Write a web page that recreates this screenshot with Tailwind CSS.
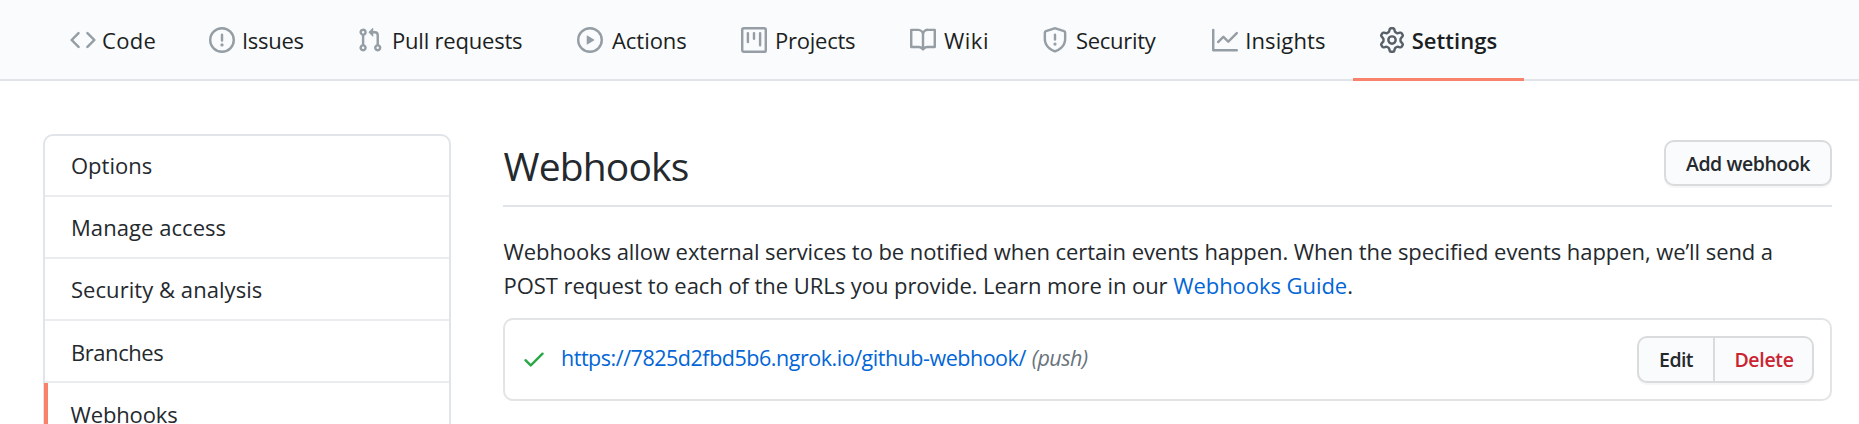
<!DOCTYPE html>
<html lang="en">
<head>
<meta charset="utf-8">
<title>Webhooks</title>
<script src="https://cdn.jsdelivr.net/npm/@tailwindcss/browser@4"></script>
</head>
<body class="h-[424px] overflow-hidden bg-white font-['Open_Sans','Noto_Sans',sans-serif] text-[22px] text-[#24292e]">
<nav class="flex h-[81px] border-b-2 border-[#e1e4e8] bg-[#fafbfc] pl-[69.5px] whitespace-nowrap text-[#1b1f23]">
  <a class="flex h-[80px] w-[139.8px] shrink-0 items-center"><svg class="size-[26px] shrink-0 fill-[#959da5]" viewBox="0 0 16 16"><path fill-rule="evenodd" d="M4.72 3.22a.75.75 0 011.06 1.06L2.06 8l3.72 3.72a.75.75 0 11-1.06 1.06L.47 8.53a.75.75 0 010-1.06l4.25-4.25zm6.56 0a.75.75 0 10-1.06 1.06L13.94 8l-3.72 3.72a.75.75 0 101.06 1.06l4.25-4.25a.75.75 0 000-1.06l-4.25-4.25z"/></svg><span class="ml-[6.5px] tracking-[0.3px]">Code</span></a>
  <a class="flex h-[80px] w-[147.5px] shrink-0 items-center"><svg class="size-[26px] shrink-0 fill-[#959da5]" viewBox="0 0 16 16"><path fill-rule="evenodd" d="M8 1.5a6.5 6.5 0 100 13 6.5 6.5 0 000-13zM0 8a8 8 0 1116 0A8 8 0 010 8zm9 3a1 1 0 11-2 0 1 1 0 012 0zm-.25-6.25a.75.75 0 00-1.5 0v3.5a.75.75 0 001.5 0v-3.5z"/></svg><span class="ml-[6.7px] tracking-[-0.3px]">Issues</span></a>
  <a class="flex h-[80px] w-[220.2px] shrink-0 items-center"><svg class="size-[26px] shrink-0 fill-[#959da5]" viewBox="0 0 16 16"><path fill-rule="evenodd" d="M7.177 3.073L9.573.677A.25.25 0 0110 .854v4.792a.25.25 0 01-.427.177L7.177 3.427a.25.25 0 010-.354zM3.75 2.5a.75.75 0 100 1.5.75.75 0 000-1.5zm-2.25.75a2.25 2.25 0 113 2.122v5.256a2.251 2.251 0 11-1.5 0V5.372A2.25 2.25 0 011.5 3.25zM11 2.5h-1V4h1a1 1 0 011 1v5.628a2.251 2.251 0 101.5 0V5A2.5 2.5 0 0011 2.5zm1 10.25a.75.75 0 111.5 0 .75.75 0 01-1.5 0zM3.75 12a.75.75 0 100 1.5.75.75 0 000-1.5z"/></svg><span class="ml-[9.2px] tracking-[-0.2px]">Pull requests</span></a>
  <a class="flex h-[80px] w-[164px] shrink-0 items-center"><svg class="size-[26px] shrink-0 fill-[#959da5]" viewBox="0 0 16 16"><path fill-rule="evenodd" d="M1.5 8a6.5 6.5 0 1113 0 6.5 6.5 0 01-13 0zM8 0a8 8 0 100 16A8 8 0 008 0zM6.379 5.227A.25.25 0 006 5.442v5.117a.25.25 0 00.379.214l4.264-2.559a.25.25 0 000-.428L6.379 5.227z"/></svg><span class="ml-[9px] tracking-[-0.05px]">Actions</span></a>
  <a class="flex h-[80px] w-[169px] shrink-0 items-center"><svg class="size-[26px] shrink-0 fill-[#959da5]" viewBox="0 0 16 16"><path fill-rule="evenodd" d="M1.75 0A1.75 1.75 0 000 1.75v12.5C0 15.216.784 16 1.75 16h12.5A1.75 1.75 0 0016 14.25V1.75A1.75 1.75 0 0014.25 0H1.75zM1.5 1.75a.25.25 0 01.25-.25h12.5a.25.25 0 01.25.25v12.5a.25.25 0 01-.25.25H1.75a.25.25 0 01-.25-.25V1.75zM11.75 3a.75.75 0 00-.75.75v7.5a.75.75 0 001.5 0v-7.5a.75.75 0 00-.75-.75zm-8.25.75a.75.75 0 011.5 0v5.5a.75.75 0 01-1.5 0v-5.5zM8 3a.75.75 0 00-.75.75v3.5a.75.75 0 001.5 0v-3.5A.75.75 0 008 3z"/></svg><span class="ml-[8px] tracking-[-0.23px]">Projects</span></a>
  <a class="flex h-[80px] w-[131.8px] shrink-0 items-center"><svg class="size-[26px] shrink-0 fill-[#959da5]" viewBox="0 0 16 16"><path fill-rule="evenodd" d="M0 1.75A.75.75 0 01.75 1h4.253c1.227 0 2.317.59 3 1.501A3.744 3.744 0 0111.006 1h4.245a.75.75 0 01.75.75v10.5a.75.75 0 01-.75.75h-4.507a2.25 2.25 0 00-1.591.659l-.622.621a.75.75 0 01-1.06 0l-.622-.621A2.25 2.25 0 005.258 13H.75a.75.75 0 01-.75-.75V1.75zm8.755 3a2.25 2.25 0 012.25-2.25H14.5v9h-3.757c-.71 0-1.4.201-1.992.572l.004-7.322zm-1.504 7.324l.004-5.073-.002-2.253A2.25 2.25 0 005.003 2.5H1.5v9h3.757a3.75 3.75 0 011.994.574z"/></svg><span class="ml-[8px] tracking-[0.5px]">Wiki</span></a>
  <a class="flex h-[80px] w-[170.2px] shrink-0 items-center"><svg class="size-[26px] shrink-0 fill-[#959da5]" viewBox="0 0 16 16"><path fill-rule="evenodd" d="M7.467.133a1.75 1.75 0 011.066 0l5.25 1.68A1.75 1.75 0 0115 3.48V7c0 1.566-.32 3.182-1.303 4.682-.983 1.498-2.585 2.813-5.032 3.855a1.7 1.7 0 01-1.33 0c-2.447-1.042-4.049-2.357-5.032-3.855C1.32 10.182 1 8.566 1 7V3.48a1.75 1.75 0 011.217-1.667l5.25-1.68zm.61 1.429a.25.25 0 00-.153 0l-5.25 1.68a.25.25 0 00-.174.238V7c0 1.358.275 2.666 1.057 3.86.784 1.194 2.121 2.34 4.366 3.297a.2.2 0 00.154 0c2.245-.956 3.582-2.104 4.366-3.298C13.225 9.666 13.5 8.36 13.5 7V3.48a.25.25 0 00-.174-.237l-5.25-1.68zM9 10.5a1 1 0 11-2 0 1 1 0 012 0zm-.25-5.75a.75.75 0 10-1.5 0v3a.75.75 0 001.5 0v-3z"/></svg><span class="ml-[8.2px] tracking-[-0.28px]">Security</span></a>
  <a class="flex h-[80px] w-[141px] shrink-0 items-center"><svg class="size-[26px] shrink-0 fill-[#959da5]" viewBox="0 0 16 16"><path fill-rule="evenodd" d="M1.5 1.75a.75.75 0 00-1.5 0v12.5c0 .414.336.75.75.75h14.5a.75.75 0 000-1.5H1.5V1.75zm14.28 2.53a.75.75 0 00-1.06-1.06L10 7.94 7.53 5.47a.75.75 0 00-1.06 0L3.22 8.72a.75.75 0 001.06 1.06L7 7.06l2.47 2.47a.75.75 0 001.06 0l5.25-5.25z"/></svg><span class="ml-[7.3px] tracking-[0.1px]">Insights</span></a>
  <a class="flex h-[81px] w-[171px] shrink-0 items-center border-b-[3px] border-[#f9826c] pt-[2px] pl-[26px]"><svg class="size-[26px] shrink-0 fill-[#586069]" viewBox="0 0 16 16"><path fill-rule="evenodd" d="M7.429 1.525a6.593 6.593 0 011.142 0c.036.003.108.036.137.146l.289 1.105c.147.56.55.967.997 1.189.174.086.341.183.501.29.417.278.97.423 1.53.27l1.102-.303c.11-.03.175.016.195.046.219.31.41.641.573.989.014.031.022.11-.059.19l-.815.806c-.411.406-.562.957-.53 1.456a4.588 4.588 0 010 .582c-.032.499.119 1.05.53 1.456l.815.806c.08.08.073.159.059.19a6.494 6.494 0 01-.573.99c-.02.029-.086.074-.195.045l-1.103-.303c-.559-.153-1.112-.008-1.529.27-.16.107-.327.204-.5.29-.449.222-.851.628-.998 1.189l-.289 1.105c-.029.11-.101.143-.137.146a6.613 6.613 0 01-1.142 0c-.036-.003-.108-.037-.137-.146l-.289-1.105c-.147-.56-.55-.967-.997-1.189a4.502 4.502 0 01-.501-.29c-.417-.278-.97-.423-1.53-.27l-1.102.303c-.11.03-.175-.016-.195-.046a6.492 6.492 0 01-.573-.989c-.014-.031-.022-.11.059-.19l.815-.806c.411-.406.562-.957.53-1.456a4.587 4.587 0 010-.582c.032-.499-.119-1.05-.53-1.456l-.815-.806c-.08-.08-.073-.159-.059-.19a6.44 6.44 0 01.573-.99c.02-.029.086-.075.195-.045l1.103.303c.559.153 1.112.008 1.529-.27.16-.107.327-.204.5-.29.449-.222.851-.628.998-1.189l.289-1.105c.029-.11.101-.143.137-.146zM8 0c-.236 0-.47.01-.701.03-.743.065-1.29.615-1.458 1.261l-.29 1.106c-.017.066-.078.158-.211.224a5.994 5.994 0 00-.668.386c-.123.082-.233.09-.3.071L3.27 2.776c-.644-.177-1.392.02-1.82.63a7.977 7.977 0 00-.704 1.217c-.315.675-.111 1.422.363 1.891l.815.806c.05.048.098.147.088.294a6.084 6.084 0 000 .772c.01.147-.038.246-.088.294l-.815.806c-.474.469-.678 1.216-.363 1.891.2.428.436.835.704 1.218.428.609 1.176.806 1.82.63l1.103-.303c.066-.019.176-.011.299.071.213.143.436.272.668.386.133.066.194.158.212.224l.289 1.106c.169.646.715 1.196 1.458 1.26a8.094 8.094 0 001.402 0c.743-.064 1.29-.614 1.458-1.26l.29-1.106c.017-.066.078-.158.211-.224a5.98 5.98 0 00.668-.386c.123-.082.233-.09.3-.071l1.102.302c.644.177 1.392-.02 1.82-.63.268-.382.505-.789.704-1.217.315-.675.111-1.422-.364-1.891l-.814-.806c-.05-.048-.098-.147-.088-.294a6.1 6.1 0 000-.772c-.01-.147.039-.246.088-.294l.814-.806c.475-.469.679-1.216.364-1.891a7.992 7.992 0 00-.704-1.218c-.428-.609-1.176-.806-1.82-.63l-1.103.303c-.066.019-.176.011-.299-.071a5.991 5.991 0 00-.668-.386c-.133-.066-.194-.158-.212-.224L10.16 1.29C9.99.645 9.444.095 8.701.031A8.094 8.094 0 008 0zm1.5 8a1.5 1.5 0 11-3 0 1.5 1.5 0 013 0zM11 8a3 3 0 11-6 0 3 3 0 016 0z"/></svg><span class="ml-[6.7px] font-semibold tracking-[0.05px]">Settings</span></a>
</nav>
<div class="flex items-start pl-[43px] pr-[27px]">
  <aside class="mt-[53px] w-[408px] shrink-0 rounded-[10px] border-2 border-[#e1e4e8] leading-[60px]">
    <a class="block h-[61px] border-b-2 border-[#eaecef] pl-[26px] leading-[58px]">Options</a>
    <a class="block h-[62px] border-b-2 border-[#eaecef] pl-[26px] tracking-[0.06px]">Manage access</a>
    <a class="block h-[62px] border-b-2 border-[#eaecef] pl-[26px] tracking-[0.05px]">Security &amp; analysis</a>
    <a class="block h-[62px] border-b-2 border-[#eaecef] pl-[26px] leading-[62px] tracking-[-0.44px]">Branches</a>
    <a class="-ml-px block h-[62px] border-b-2 border-l-[4px] border-b-[#eaecef] border-l-[#f9826c] pl-[22.5px] leading-[62px] tracking-[-0.13px]">Webhooks</a>
  </aside>
  <main class="ml-[52px] mt-[59px] min-w-0 flex-1">
    <div class="flex h-[67px] items-start justify-between border-b-2 border-[#e1e4e8]">
      <h1 class="pl-[0.5px] text-[39px] leading-[51px] tracking-[-0.85px]">Webhooks</h1>
      <button class="h-[46px] w-[168px] rounded-[10px] border-2 border-[#d9dbdd] bg-[#fafbfc] pt-[2px] text-[19.5px] font-semibold tracking-[-0.44px] shadow-[0_2px_0_rgba(27,31,35,0.04)]">Add webhook</button>
    </div>
    <p class="mt-[27px] whitespace-nowrap pl-[0.5px] leading-[34px]"><span class="tracking-[-0.07px]">Webhooks allow external services to be notified when certain events happen. When the specified events happen, we’ll send a</span><br><span class="tracking-[-0.055px]">POST request to each of the URLs you provide. Learn more in our <a class="text-[#0366d6]">Webhooks Guide</a>.</span></p>
    <div class="mt-[16px] flex h-[83px] items-center rounded-[10px] border-2 border-[#e3e4e6] pl-[16px] pr-[16px]">
      <svg class="mb-[2px] size-[26px] shrink-0 fill-[#28a745]" viewBox="0 0 16 16"><path fill-rule="evenodd" d="M13.78 4.22a.75.75 0 010 1.06l-7.25 7.25a.75.75 0 01-1.06 0L2.22 9.28a.75.75 0 011.06-1.06L6 10.94l6.72-6.72a.75.75 0 011.06 0z"/></svg>
      <a class="mb-[2px] ml-[14px] text-[21.5px] tracking-[-0.47px] text-[#0366d6]">https://7825d2fbd5b6.ngrok.io/github-webhook/</a>
      <em class="mb-[2px] ml-[6px] text-[21.5px] tracking-[-0.5px] text-[#6a737d]">(push)</em>
      <div class="ml-auto flex h-[47px] rounded-[10px] border-2 border-[#d9dbdd] bg-[#fafbfc] text-[19.5px] font-semibold shadow-[0_2px_0_rgba(27,31,35,0.04)]">
        <button class="w-[76px] border-r-2 border-[#d9dbdd] pt-px tracking-[-0.6px]">Edit</button>
        <button class="w-[97px] pt-px pl-px tracking-[-0.33px] text-[#cb2431]">Delete</button>
      </div>
    </div>
  </main>
</div>
</body>
</html>
